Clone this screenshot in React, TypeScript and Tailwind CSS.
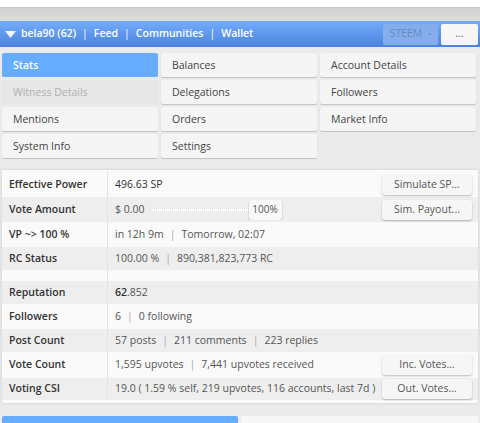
import { ReactNode } from "react";

const tabs: { label: string; state?: "active" | "disabled" }[] = [
  { label: "Stats", state: "active" },
  { label: "Balances" },
  { label: "Account Details" },
  { label: "Witness Details", state: "disabled" },
  { label: "Delegations" },
  { label: "Followers" },
  { label: "Mentions" },
  { label: "Orders" },
  { label: "Market Info" },
  { label: "System Info" },
  { label: "Settings" },
];

function Sep() {
  return <span className="text-[#aaa] mx-[6px]">|</span>;
}

function Btn({ children, className = "" }: { children: ReactNode; className?: string }) {
  return (
    <button
      className={`h-[20px] w-[90px] rounded-[3px] bg-[#f6f6f6] text-[#555] shadow-[0_1px_2px_rgba(0,0,0,0.25)] ${className}`}
    >
      {children}
    </button>
  );
}

type Row = {
  label: string;
  h: string;
  gray?: boolean;
  value: ReactNode;
  action?: string;
};

const rows: Row[] = [
  { label: "Effective Power", h: "h-[25px]", value: <span className="text-[#333]">496.63 SP</span>, action: "Simulate SP..." },
  {
    label: "Vote Amount",
    h: "h-[25px]",
    gray: true,
    value: (
      <div className="flex items-center">
        <span>$ 0.00</span>
        <div className="ml-[7px] h-[4px] w-[97px] border-y border-dotted border-[#ddd] bg-white" />
        <button className="h-[20px] w-[33px] rounded-[3px] bg-[#f8f8f8] text-[10px] text-[#555] shadow-[0_1px_2px_rgba(0,0,0,0.25)]">
          100%
        </button>
      </div>
    ),
    action: "Sim. Payout...",
  },
  {
    label: "VP ~> 100 %",
    h: "h-[25px]",
    value: (
      <span>
        in 12h 9m<Sep />Tomorrow, 02:07
      </span>
    ),
  },
  {
    label: "RC Status",
    h: "h-[23px]",
    gray: true,
    value: (
      <span>
        100.00 %<Sep />890,381,823,773 RC
      </span>
    ),
  },
];

const rows2: Row[] = [
  {
    label: "Reputation",
    h: "h-[23px]",
    gray: true,
    value: (
      <span>
        <span className="text-[#333] font-semibold">62</span>.852
      </span>
    ),
  },
  {
    label: "Followers",
    h: "h-[25px]",
    value: (
      <span>
        6<Sep />0 following
      </span>
    ),
  },
  {
    label: "Post Count",
    h: "h-[23px]",
    gray: true,
    value: (
      <span>
        57 posts<Sep />211 comments<Sep />223 replies
      </span>
    ),
  },
  {
    label: "Vote Count",
    h: "h-[26px]",
    value: (
      <span>
        1,595 upvotes<Sep />7,441 upvotes received
      </span>
    ),
    action: "Inc. Votes...",
  },
  {
    label: "Voting CSI",
    h: "h-[22px]",
    gray: true,
    value: <span>19.0 ( 1.59 % self, 219 upvotes, 116 accounts, last 7d )</span>,
    action: "Out. Votes...",
  },
];

function TableRow({ row }: { row: Row }) {
  return (
    <div className={`flex items-center ${row.h} ${row.gray ? "bg-[#eeeeee]" : "bg-[#fafafa]"}`}>
      <div className="flex h-full w-[106px] shrink-0 items-center border-r border-[#e4e4e4] pl-[7px] font-semibold text-[#333]">
        {row.label}
      </div>
      <div className="flex min-w-0 flex-1 items-center overflow-hidden whitespace-nowrap pl-[7px] text-[#555]">
        {row.value}
      </div>
      {row.action && <Btn className="ml-[2px] mr-[6px] shrink-0">{row.action}</Btn>}
    </div>
  );
}

export default function App() {
  return (
    <div className="h-[423px] w-[480px] overflow-hidden bg-[#ebebeb] font-['Open_Sans',sans-serif] text-[10.5px]">
      <div className="h-[7px] bg-white" />
      <div className="h-[14px] border-t border-[#c8c8c8] bg-gradient-to-b from-[#d2d2d2] to-[#dddddd]" />

      {/* top bar */}
      <div className="flex h-[26px] items-center bg-gradient-to-b from-[#74adfa] to-[#4a82df] pl-[5px] pr-[2px] text-white">
        <svg width="11" height="7" viewBox="0 0 11 7" className="mr-[5px]">
          <path d="M0 0h11L5.5 7z" fill="#f2f6fc" />
        </svg>
        <span className="font-semibold">bela90 (62)</span>
        <span className="mx-[6px]">|</span>
        <span className="font-semibold">Feed</span>
        <span className="mx-[6px]">|</span>
        <span className="font-semibold">Communities</span>
        <span className="mx-[6px]">|</span>
        <span className="font-semibold">Wallet</span>
        <div className="ml-auto flex h-[21px] w-[55px] items-center justify-center rounded-[2px] bg-[#84adec] text-[#6a8bc2]">
          STEEM
          <span className="ml-[6px] text-[8px]">•</span>
        </div>
        <div className="ml-[3px] flex h-[21px] w-[37px] items-center justify-center rounded-[2px] bg-[#f7f7f7] text-[#666]">
          ...
        </div>
      </div>

      {/* tabs */}
      <div className="grid grid-cols-3 gap-[3px] pl-[2px] pr-[4px] pt-[6px]">
        {tabs.map((t) => (
          <div
            key={t.label}
            className={`flex h-[24px] items-center rounded-[2px] pl-[11px] pt-[1px] ${
              t.state === "active"
                ? "bg-[#66acff] font-semibold text-white"
                : t.state === "disabled"
                  ? "bg-[#e7e7e7] text-[#b0b0b0]"
                  : "bg-[#f5f5f5] text-[#444] shadow-[0_1px_1px_rgba(0,0,0,0.18)]"
            }`}
          >
            {t.label}
          </div>
        ))}
      </div>

      {/* stats card */}
      <div className="mx-[2px] mt-[12px] bg-[#fbfbfb] pb-[3px] pt-[2px] shadow-[0_0_3px_rgba(0,0,0,0.15)]">
        {rows.map((r) => (
          <TableRow key={r.label} row={r} />
        ))}
        <div className="flex h-[11px] bg-[#fafafa]">
          <div className="w-[106px] border-r border-[#e4e4e4]" />
        </div>
        {rows2.map((r) => (
          <TableRow key={r.label} row={r} />
        ))}
      </div>

      <div className="mt-[13px] flex gap-[3px] px-[2px]">
        <div className="h-[10px] w-[236px] rounded-t-[2px] bg-[#66acff]" />
        <div className="h-[10px] flex-1 rounded-t-[2px] bg-[#f7f7f7]" />
      </div>
    </div>
  );
}
